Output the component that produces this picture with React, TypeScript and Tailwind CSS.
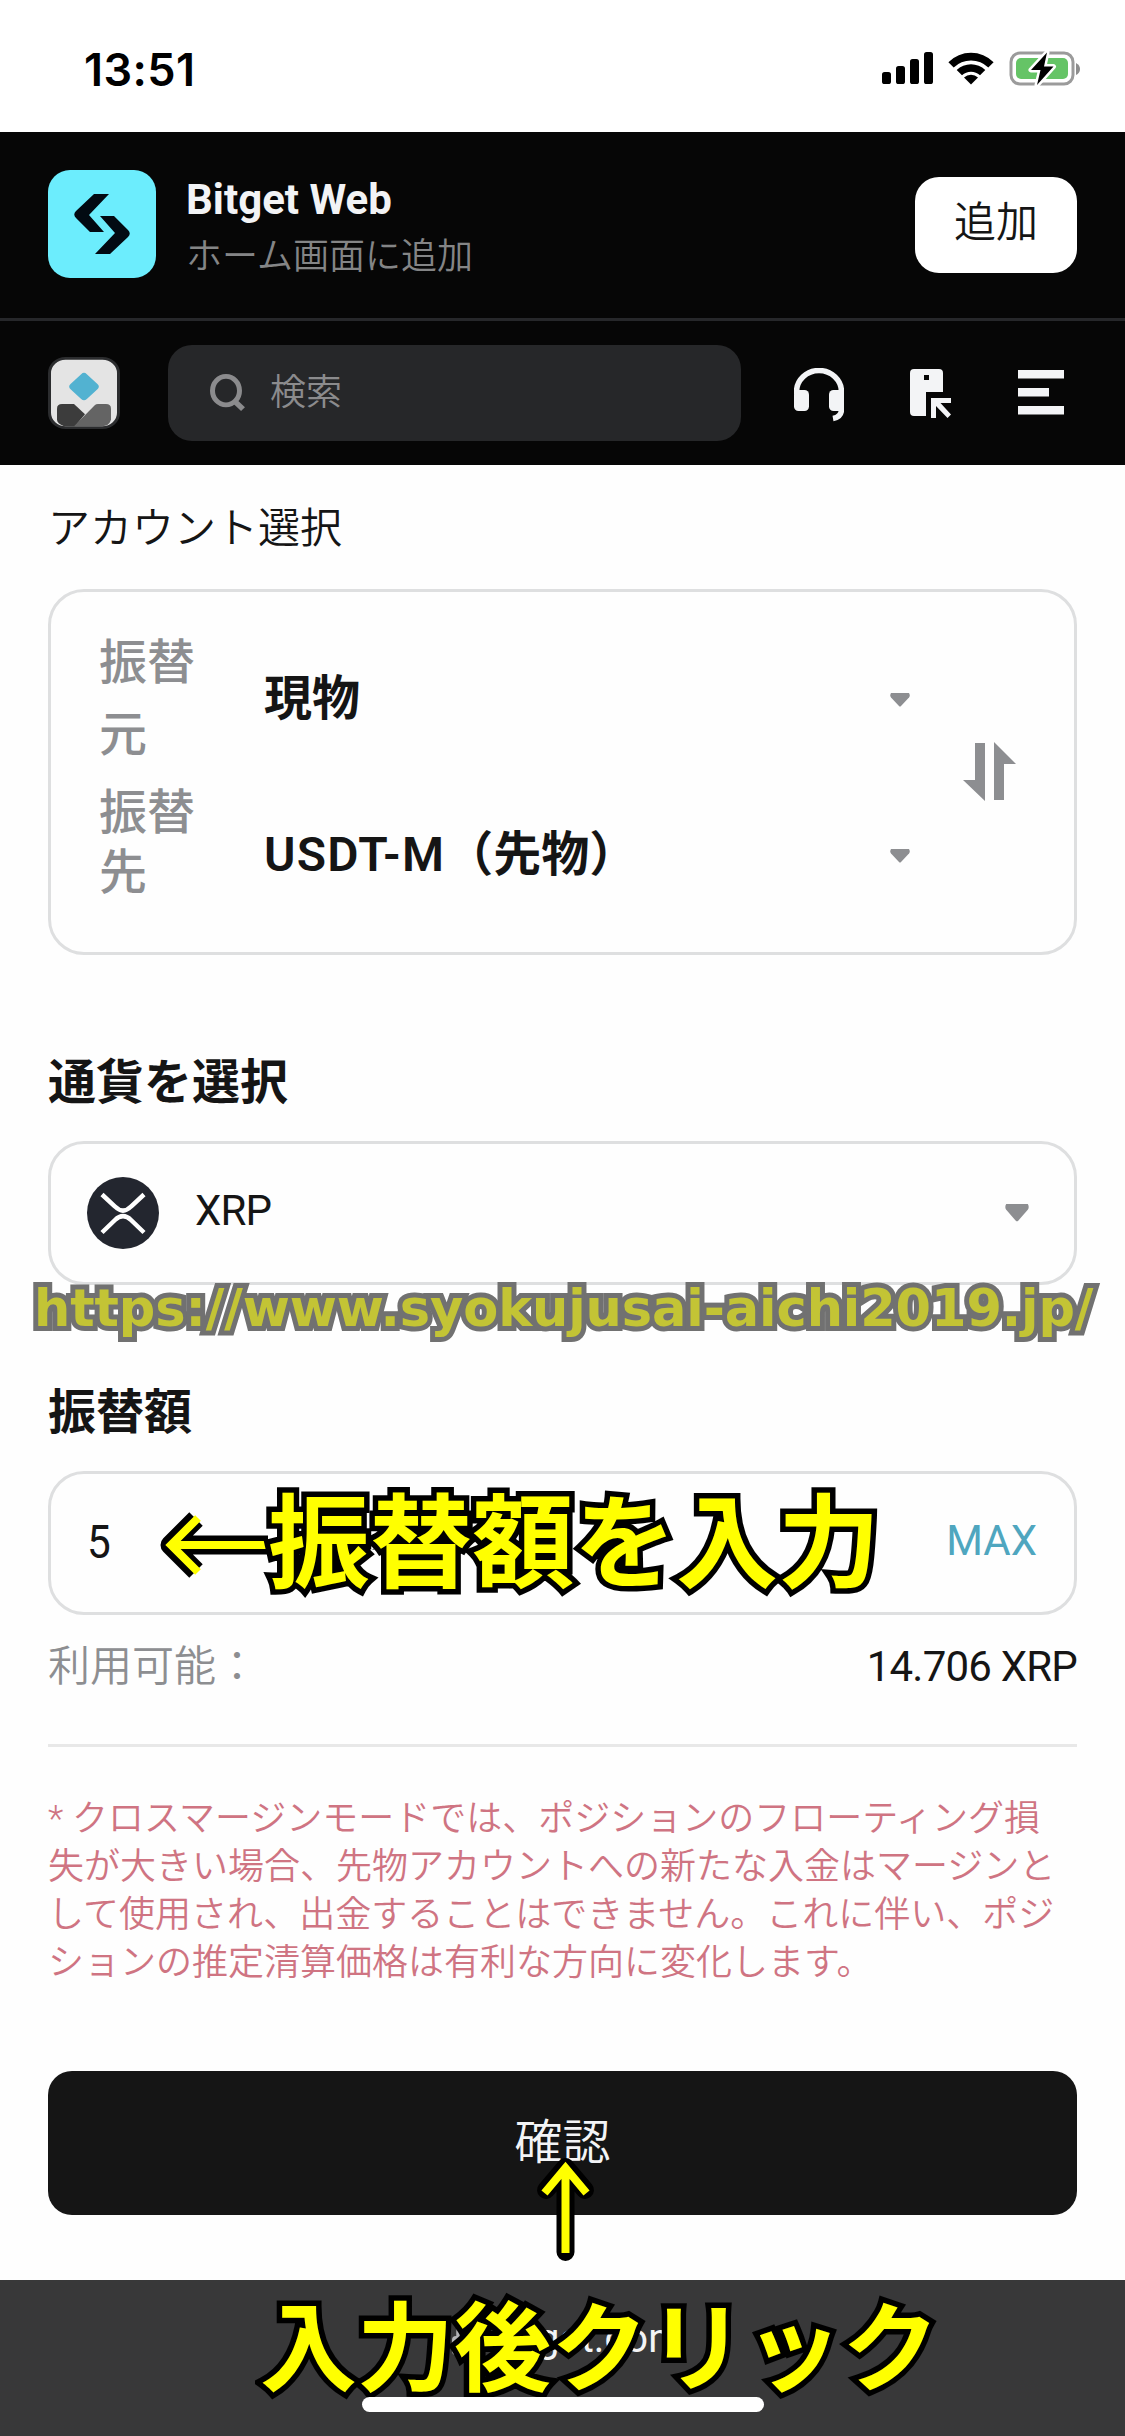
import type { ReactNode } from "react";

const ui = "font-['Roboto','Noto_Sans_CJK_JP',sans-serif]";

function StatusBar() {
  return (
    <div className="flex h-[132px] shrink-0 items-center justify-between bg-white pr-[43px] pl-[84px]">
      <div className="mt-[7px] font-['Inter',sans-serif] text-[45px] font-semibold tracking-[0.4px] text-black">13:51</div>
      <svg className="mt-[5px]" width="200" height="36" viewBox="0 0 200 36">
        <rect x="0" y="21" width="9" height="12" rx="2.6" />
        <rect x="14" y="15" width="9" height="18" rx="2.6" />
        <rect x="28" y="8" width="9" height="25" rx="2.6" />
        <rect x="42" y="1" width="9" height="32" rx="2.6" />
        <path d="M66.400 11.200a32 32 0 0 1 45.200 0l-5.300 5.300a24.600 24.600 0 0 0-34.600 0z" />
        <path d="M74.700 19.100a20.600 20.600 0 0 1 28.600 0l-5.300 5.200a13.300 13.300 0 0 0-18 0z" />
        <path d="M82 26.600a10.300 10.300 0 0 1 14 0l-7 6.800z" />
        <rect x="129" y="2" width="62" height="31" rx="9" fill="none" stroke="#9b9b9b" strokeWidth="3" />
        <rect x="134" y="7" width="52" height="21" rx="5" fill="#65c466" />
        <path d="M194 12v12q4-2 4-6t-4-6z" fill="#8d8d8d" />
        <path d="M165 1.500 149 19h9.500L155 34l16.500-18.500H162z" fill="#000" stroke="#fff" strokeWidth="5" strokeLinejoin="round" paintOrder="stroke" />
      </svg>
    </div>
  );
}

function InstallBanner() {
  return (
    <div className="flex h-[189px] items-center border-b-[3px] border-[#26272a] px-12">
      <div className="-mt-[2px] flex size-[108px] items-center justify-center rounded-[22px] bg-[#6cedfd]">
        <svg width="56" height="60" viewBox="0 0 56 60" fill="#020a12">
          <path d="M20 0H35L15 21L30 38H16L2 24Q-1.500 20.500 2 17Z" />
          <path d="M36 60H21L41 39L26 22H40L54 36Q57.500 39.500 54 43Z" />
        </svg>
      </div>
      <div className="mt-[9px] ml-[30px] flex flex-1 flex-col">
        <span className="text-[42px] leading-[54px] font-bold text-[#f2f3f5]">Bitget Web</span>
        <span className="text-[36px] leading-[60px] font-[350] text-[#848586]">ホーム画面に追加</span>
      </div>
      <div className="flex h-24 w-[162px] items-center justify-center rounded-[24px] bg-white pb-[6px] text-[42px] font-[350] text-[#151515]">
        追加
      </div>
    </div>
  );
}

function Toolbar() {
  return (
    <div className="flex h-[144px] items-center px-12">
      <svg width="72" height="72" viewBox="0 0 72 78" preserveAspectRatio="none">
        <rect x="1.500" y="1.500" width="69" height="75" rx="16" fill="#e4e4e4" stroke="#2b2c2e" strokeWidth="3" />
        <rect x="24.500" y="20.500" width="23" height="23" rx="4" fill="#52b2d1" transform="rotate(45 36 32)" />
        <path d="M9 56q0-5 5-5h12L37 62 27 75H16Q9 72 9 68z" fill="#3c3c3c" />
        <path d="M26 75 47 52q1-1 3-1h8q5 0 5 5v12q-2 7-9 7z" fill="#646464" />
      </svg>
      <div className="ml-12 flex h-24 w-[573px] items-center rounded-[24px] bg-[#262729] pl-[42px]">
        <svg className="-mt-[1px]" width="36" height="38" viewBox="0 0 36 40" fill="none" stroke="#8b8b8d" preserveAspectRatio="none">
          <ellipse cx="16" cy="17.500" rx="13.500" ry="15" strokeWidth="5" />
          <path d="m24 28 9 9" strokeWidth="5.500" />
        </svg>
        <span className="ml-6 text-[36px] font-[350] text-[#8b8b8d]">検索</span>
      </div>
      <svg className="mt-[4px] ml-[53px]" width="50" height="54" viewBox="0 0 50 54" fill="#f3f4f6">
        <path d="M2.500 26v-2a22.500 21.500 0 0 1 45 0v17q0 8-8.500 9.500" fill="none" stroke="#f3f4f6" strokeWidth="5.500" />
        <rect x="0" y="22" width="15" height="21" rx="4.500" />
        <rect x="35" y="22" width="15" height="21" rx="4.500" />
      </svg>
      <svg className="mt-[2px] ml-[66px]" width="42" height="50" viewBox="0 0 42 50" fill="#f3f4f6">
        <path fillRule="evenodd" d="M4 0H29q4 0 4 4V23H16V47H4q-4 0-4-4V4q0-4 4-4zM14 6v5h5V6z" />
        <path d="M21 29h20v5H30.500L41 45.500 37.500 49 26 37v12h-5z" />
      </svg>
      <svg className="-mt-[2px] ml-[66px]" width="46" height="45" viewBox="0 0 46 45" fill="#f3f4f6">
        <path d="M0 0h46v8.500H0zM0 18h31v8.500H0zM0 36h46v8.500H0z" />
      </svg>
    </div>
  );
}

function Caret({ width = 20, height = 14 }: { width?: number; height?: number }) {
  return (
    <svg width={width} height={height} viewBox="0 0 20 14" fill="#8d8e91" preserveAspectRatio="none">
      <path d="M1 0H19Q20.500 2.500 19 4.500L11 13q-1 1-2 0L1 4.500Q-.5 2.500 1 0z" />
    </svg>
  );
}

function Field({ children }: { children: ReactNode }) {
  return <div className="relative flex h-36 items-center rounded-[36px] border-[3px] border-[#dedfe0]">{children}</div>;
}

function Title({ children }: { children: ReactNode }) {
  return <h2 className="flex h-[72px] items-center text-[48px] leading-[72px] font-bold text-[#151515]">{children}</h2>;
}

function AccountCard() {
  return (
    <div className="mt-[25px] flex h-[366px] rounded-[36px] border-[3px] border-[#dedfe0] pl-[48px]">
      <div className="flex-1 text-[48px] font-medium">
        <div className="mt-[36px] flex h-[144px] items-center">
          <div className="w-[100px] pb-[2px] leading-[72px] text-[#8d8e91]">振替元</div>
          <div className="ml-[65px] flex-1 pb-[2px] leading-[72px] font-bold text-[#151515]">現物</div>
          <Caret />
        </div>
        <div className="mt-[12px] flex h-[144px] items-center">
          <div className="w-[100px] pb-[26px] leading-[60px] text-[#8d8e91]">振替先</div>
          <div className="ml-[65px] flex-1 pb-[2px] leading-[72px] font-bold text-[#151515]">
            <span className="font-semibold tracking-[1.2px]">USDT-M</span>（先物）
          </div>
          <Caret />
        </div>
      </div>
      <svg className="mt-[150px] mr-[58px] ml-[53px]" width="53" height="60" viewBox="0 0 53 60" fill="#8d8e91">
        <path d="M12 1H22V59L0 38H12zM31 0 53 22H41V58H31z" />
      </svg>
    </div>
  );
}

export default function App() {
  return (
    <main lang="ja" className={`relative flex h-[2436px] w-[1125px] flex-col overflow-hidden bg-[#fefefe] ${ui}`}>
      <StatusBar />
      <header className="h-[333px] shrink-0 bg-[#060606]">
        <InstallBanner />
        <Toolbar />
      </header>

      <section className="flex h-[1815px] flex-col px-12">
        <div className="mt-[29px] text-[42px] leading-[70px] font-[350] text-[#151515]">アカウント選択</div>
        <AccountCard />

        <div className="mt-[92px] mb-[22px]">
          <Title>通貨を選択</Title>
        </div>
        <Field>
          <svg className="ml-9" width="72" height="72" viewBox="0 0 72 72" fill="none" stroke="#fff" strokeWidth="4.500">
            <circle cx="36" cy="36" r="36" fill="#23262f" stroke="none" />
            <path d="M15 17.500 28 29.500q8 8 16 0L57 17.500M15 55.500 28 43q8-8 16 0L57 55.500" />
          </svg>
          <span className="ml-9 flex-1 pb-[5px] text-[42px] font-normal tracking-[-0.8px] text-[#151515]">XRP</span>
          <div className="mr-[45px]">
            <Caret width={24} height={18} />
          </div>
          <div className="absolute top-[130px] -left-[17px] font-['DejaVu_Sans',sans-serif] text-[51px] leading-[70px] font-bold tracking-[-0.1px] whitespace-nowrap text-[#c3c435] [-webkit-text-stroke:10px_#717171] [paint-order:stroke_fill]">
            https://www.syokujusai-aichi2019.jp/
          </div>
        </Field>

        <div className="mt-[92px] mb-[22px]">
          <Title>振替額</Title>
        </div>
        <Field>
          <span className="ml-9 inline-block origin-left scale-x-90 pb-[2px] text-[47px] text-[#151515]">5</span>
          <span className="mr-[37px] ml-auto pb-[5px] text-[42px] text-[#4fa6bf]">MAX</span>
          <div className="absolute top-[1px] left-[111px] flex h-[140px] items-center">
            <svg width="106" height="62" viewBox="0 0 106 62" fill="none" strokeLinejoin="miter" className="overflow-visible">
              <path d="M106 31H8M34 5 8 31 34 57" stroke="#000" strokeWidth="19" strokeLinejoin="round" />
              <path d="M106 31H9M36 4 9 31 36 58" stroke="#ff0" strokeWidth="8" />
            </svg>
            <span className="text-[102px] leading-[140px] font-bold whitespace-nowrap text-[#ff0] [-webkit-text-stroke:11px_#000] [paint-order:stroke_fill]">
              振替額を入力
            </span>
          </div>
        </Field>

        <div className="mt-[21px] flex h-[60px] items-center justify-between text-[42px]">
          <span className="font-[350] text-[#8d8e91]">利用可能：</span>
          <span className="tracking-[-0.8px] text-[#151515]">14.706 XRP</span>
        </div>
        <div className="mt-[48px] h-[3px] shrink-0 bg-[#e8e8e8]" />
        <p className="mt-[48px] text-[36px] leading-[48px] font-[350] text-[#cf7482]">
          * クロスマージンモードでは、ポジションのフローティング損
          <br />
          失が大きい場合、先物アカウントへの新たな入金はマージンと
          <br />
          して使用され、出金することはできません。これに伴い、ポジ
          <br />
          ションの推定清算価格は有利な方向に変化します。
        </p>
        <div className="relative mt-[84px] flex h-36 items-center justify-center rounded-[24px] bg-[#151515] pb-[1px] text-[48px] font-[350] text-[#f3f4f6]">
          確認
          <svg className="absolute top-[86px] left-[488px] overflow-visible" width="58" height="102" viewBox="0 0 58 102" fill="none">
            <path d="M29.500 95V11M10 33 29.500 10 49 33" stroke="#000" strokeWidth="18" strokeLinecap="round" strokeLinejoin="round" />
            <path d="M29.500 96V11M8.500 36 29.500 11 50.500 36" stroke="#ff0" strokeWidth="8" />
          </svg>
        </div>
      </section>

      <footer className="relative flex h-[156px] flex-col items-center bg-[#383839]">
        <div className="mt-[29px] ml-[10px] flex items-center gap-[14px]">
          <svg width="26" height="34" viewBox="0 0 26 34" fill="#b5b5b8">
            <rect y="14" width="26" height="19" rx="4" />
            <path d="M6 16V9q0-7 7-7t7 7v7" fill="none" stroke="#b5b5b8" strokeWidth="3.500" />
          </svg>
          <span className="text-[40px] leading-[60px] text-[#f3f4f6]">bitget.com</span>
        </div>
        <div className="absolute top-[3px] left-[260px] text-[97px] leading-[134px] font-bold whitespace-nowrap text-[#ff0] [-webkit-text-stroke:11px_#000] [paint-order:stroke_fill]">
          入力後クリック
        </div>
        <div className="absolute top-[117px] h-[15px] w-[402px] rounded-full bg-white" />
      </footer>
    </main>
  );
}
